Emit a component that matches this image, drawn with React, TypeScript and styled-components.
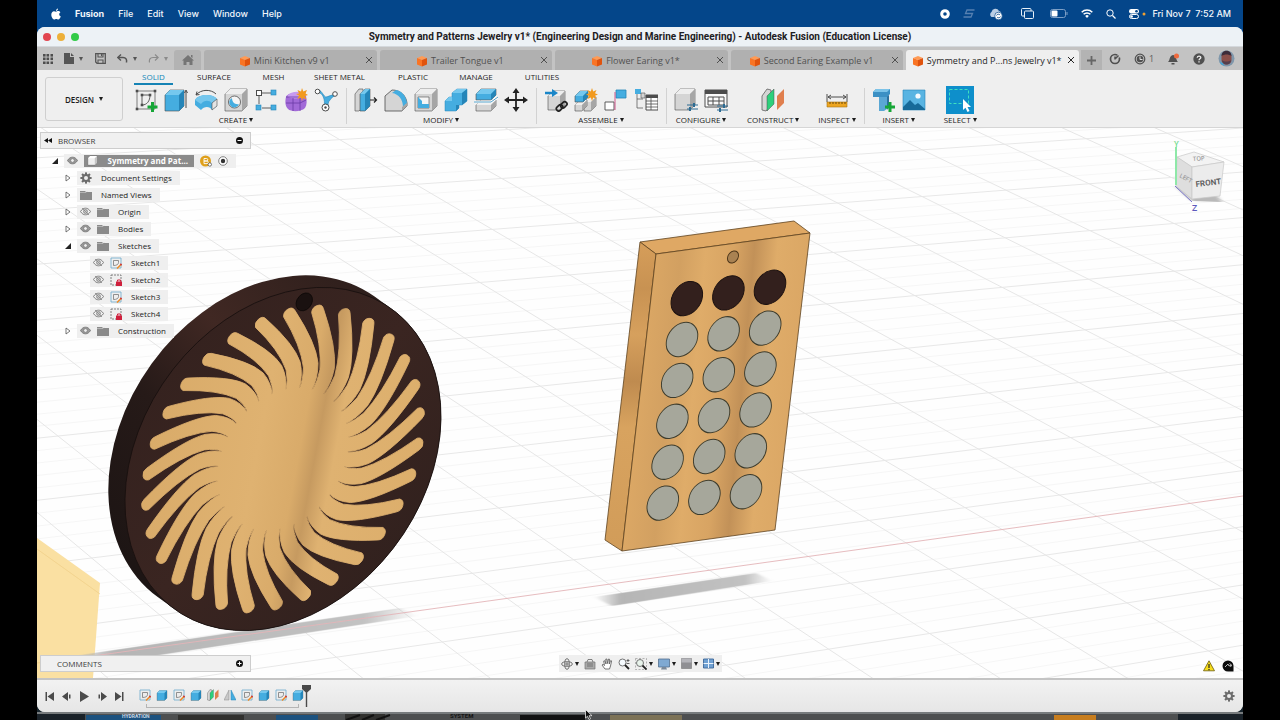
import React from "react";
import styled, { createGlobalStyle } from "styled-components";

const GlobalStyle = createGlobalStyle`
  * { box-sizing: border-box; }
  body { margin: 0; background: #000; font-family: "Open Sans", "Noto Sans", sans-serif; color: #1c1c1c; }
  button { font: inherit; color: inherit; background: none; border: 0; padding: 0; margin: 0; display: inline-flex; align-items: center; justify-content: center; }
  svg { display: block; flex: none; }
`;

/* ---------- layout ---------- */
const Screen = styled.div`
  min-height: 100vh;
  padding: 0 37px;
  display: flex;
  flex-direction: column;
  background: #000;
`;
const Desktop = styled.div`
  flex: 1;
  display: flex;
  flex-direction: column;
  background: linear-gradient(#04468a 0 40px, #17242c 60px);
`;
const MenuBar = styled.nav`
  height: 27px;
  padding: 0 12px 0 14px;
  display: flex;
  align-items: center;
  gap: 14px;
  color: #f2f6fb;
  font: 500 9px/12px Inter, sans-serif;
`;
const MenuItem = styled.button<{ $bold?: boolean }>`
  font-weight: ${(p) => (p.$bold ? 700 : 500)};
`;
const MenuExtras = styled.div`
  margin-left: auto;
  display: flex;
  align-items: center;
  gap: 13px;
`;
const Clock = styled.time`
  white-space: pre;
  margin-left: -7px;
`;
const AppWindow = styled.main`
  flex: 1;
  display: flex;
  flex-direction: column;
  border-radius: 8px;
  overflow: hidden;
  background: #efefef;
`;
const TitleBar = styled.header`
  height: 20px;
  padding: 0 6px;
  display: grid;
  grid-template-columns: 60px 1fr 60px;
  align-items: center;
  background: #edf2f6;
  border-bottom: 1px solid #d4d8dc;
`;
const Lights = styled.div`
  display: flex;
  gap: 6px;
`;
const Light = styled.button<{ $c: string }>`
  width: 8px;
  height: 8px;
  border-radius: 50%;
  background: ${(p) => p.$c};
`;
const Title = styled.h1`
  margin: 0;
  text-align: center;
  white-space: nowrap;
  font: 700 10px/14px Roboto, sans-serif;
  color: #1d2023;
`;
const TabBar = styled.div`
  height: 23px;
  display: flex;
  align-items: flex-end;
  background: #c3c3c3;
  color: #5c5c5c;
`;
const QuickTools = styled.div`
  width: 137px;
  height: 23px;
  padding: 0 6px;
  display: flex;
  align-items: center;
  justify-content: space-between;
`;
const ToolPair = styled.button<{ $dim?: boolean }>`
  gap: 5px;
  color: ${(p) => (p.$dim ? "#8b8b8b" : "#555")};
`;
const HomeTab = styled.button`
  width: 27px;
  height: 20px;
  margin-right: 3px;
  background: #b3b3b3;
  border-radius: 3px 3px 0 0;
`;
const Tabs = styled.div`
  flex: 1;
  display: flex;
  gap: 3px;
  min-width: 0;
`;
const Tab = styled.div<{ $active?: boolean }>`
  flex: 1;
  min-width: 0;
  height: 20px;
  padding-right: 4px;
  display: flex;
  align-items: center;
  border-radius: 3px 3px 0 0;
  background: ${(p) => (p.$active ? "#efefef" : "#b0b0b0")};
  color: ${(p) => (p.$active ? "#262626" : "#505050")};
`;
const TabName = styled.button`
  flex: 1;
  gap: 3px;
  padding-top: 1px;
  font-size: 9px;
  line-height: 12px;
  white-space: nowrap;
`;
const NewTab = styled.button`
  width: 21px;
  height: 20px;
  margin-left: 2px;
  background: #b3b3b3;
`;
const Account = styled.div`
  width: 141px;
  height: 23px;
  padding: 0 8px 0 7px;
  display: flex;
  align-items: center;
  justify-content: space-between;
  font-size: 9px;
  button { gap: 3px; }
`;
const Ribbon = styled.section`
  height: 58px;
  display: flex;
  background: #efefef;
  border-bottom: 1px solid #d6d6d6;
`;
const Workspace = styled.button`
  width: 78px;
  height: 44px;
  margin: 7px 3px 0 8px;
  gap: 5px;
  border: 1px solid #cfcfcf;
  border-radius: 3px;
  font-size: 8px;
  font-weight: 600;
`;
const RibbonBody = styled.div`
  flex: 1;
  display: flex;
  flex-direction: column;
`;
const RibbonTabs = styled.div`
  height: 15px;
  padding-left: 8px;
  display: flex;
`;
const RibbonTab = styled.button<{ $active?: boolean; $w: number }>`
  width: ${(p) => p.$w}px;
  font-size: 8px;
  line-height: 14px;
  font-weight: 500;
  color: ${(p) => (p.$active ? "#0f86b8" : "#1f1f1f")};
  span { height: 15px; padding: 0 8px; border-bottom: 2px solid ${(p) => (p.$active ? "#1583b5" : "transparent")}; }
`;
const Groups = styled.div`
  flex: 1;
  display: flex;
`;
const Group = styled.div<{ $pad?: number }>`
  padding: 0 ${(p) => p.$pad ?? 8}px;
  display: flex;
  flex-direction: column;
  align-items: center;
  position: relative;
  & + &::before {
    content: "";
    position: absolute;
    left: 0;
    top: 3px;
    height: 36px;
    border-left: 1px solid #d2d2d2;
  }
`;
const IconRow = styled.div`
  height: 29px;
  display: flex;
  align-items: center;
  gap: 6px;
`;
const SelectTile = styled.button`
  width: 28px;
  height: 28px;
  background: #0e8fcb;
`;
const GroupLabel = styled.button`
  gap: 2px;
  font-size: 8px;
  line-height: 12px;
  font-weight: 500;
`;
const Viewport = styled.section`
  flex: 1;
  position: relative;
  display: flex;
  flex-direction: column;
  justify-content: space-between;
  padding: 4px 3px 6px;
  background: #fff;
`;
const Scene = styled.svg`
  position: absolute;
  inset: 0;
  width: 100%;
  height: 100%;
`;
const Browser = styled.aside`
  position: relative;
  width: 211px;
`;
const PanelBar = styled.div`
  width: 211px;
  height: 17px;
  padding: 0 7px 0 3px;
  display: flex;
  align-items: center;
  justify-content: space-between;
  background: #f0f0f0;
  border: 1px solid #cdcdcd;
  font-size: 8px;
  color: #3c3c3c;
`;
const PanelTitle = styled.h2<{ $indent: number }>`
  margin: 0;
  flex: 1;
  font: inherit;
  padding-left: ${(p) => p.$indent}px;
`;
const Tree = styled.ul`
  list-style: none;
  margin: 3px 0 0;
  padding: 0;
`;
const Node = styled.li<{ $indent: number }>`
  height: 17px;
  padding-left: ${(p) => p.$indent}px;
  display: flex;
  align-items: center;
  gap: 6px;
`;
const NodeBody = styled.div`
  height: 14px;
  padding: 0 8px 0 3px;
  display: flex;
  align-items: center;
  gap: 6px;
  background: #eeeeeeee;
  font-size: 8px;
  font-weight: 500;
  color: #1c1c1c;
`;
const RootName = styled.span`
  height: 12px;
  width: 110px;
  padding: 0 6px 0 3px;
  display: flex;
  align-items: center;
  justify-content: space-between;
  background: #8b8b8b;
  color: #fff;
  font-weight: 700;
`;
const NodeName = styled.button`
  padding-left: 3px;
`;
const ViewFooter = styled.footer`
  position: relative;
  display: grid;
  grid-template-columns: 1fr auto 1fr;
  align-items: center;
`;
const NavBar = styled.div`
  height: 17px;
  padding: 0 2px;
  display: flex;
  align-items: center;
  gap: 5px;
  background: #efefef;
`;
const NavButton = styled.button`
  gap: 2px;
`;
const Status = styled.div`
  justify-self: end;
  padding: 5px 6px 0 0;
  display: flex;
  gap: 7px;
`;
const Timeline = styled.section`
  height: 34px;
  padding: 0 8px;
  display: flex;
  align-items: center;
  border-top: 2px solid #c4c4c4;
  background: linear-gradient(#f2f2f2, #e6e6e6);
`;
const Transport = styled.div`
  display: flex;
  gap: 8px;
  color: #4b4b4b;
`;
const Features = styled.ol`
  list-style: none;
  margin: 0 -2px 0 15px;
  padding: 0 0 2px;
  display: flex;
  gap: 5px;
  position: relative;
  &::after {
    content: "";
    position: absolute;
    left: 7px;
    right: 5px;
    bottom: -5px;
    height: 3px;
    border: solid #b5b5b5;
    border-width: 0 1px 1px;
  }
`;
const Spacer = styled.div`
  flex: 1;
`;
const Backdrop = styled.div`
  height: 8px;
`;
const Pointer = styled.svg`
  position: fixed;
  left: 585px;
  top: 709px;
`;

/* ---------- small glyphs ---------- */
type IconProps = { children: React.ReactNode; w?: number; h?: number; box?: string };
const I = ({ children, w = 24, h = w, box = "0 0 24 24" }: IconProps) => (
  <svg width={w} height={h} viewBox={box} fill="none" aria-hidden="true">{children}</svg>
);
const Caret = () => <I w={4} h={4} box="0 0 4 4"><path d="M0 0h4L2 4z" fill="currentColor" /></I>;
const Plus = ({ x, y }: { x: number; y: number }) => (
  <path d={`M${x} ${y - 5}v10M${x - 5} ${y}h10`} stroke="#16a637" strokeWidth="3" />
);
const BLUE = "#45ade0";
const DARK = "#2585b8";
const GREY = "#d5d5d5";
const SHADE = "#a6a6a6";
const INK = "#4c4c4c";

const DocCube = () => (
  <I w={12} box="0 0 12 12">
    <path d="M1 3l5-2 5 2-5 2z" fill="#ff9b55" />
    <path d="M1 3l5 2v6.500L1 9.500z" fill="#f97424" />
    <path d="M11 3L6 5v6.500l5-2z" fill="#e0530d" />
  </I>
);
const Close = () => <I w={8} box="0 0 8 8"><path d="M1 1l6 6M7 1L1 7" stroke="currentColor" /></I>;

const Box = ({ x = 3, y = 2, w = 19, h = 20, c = GREY, s = SHADE, t = "#eee" }) => (
  <g>
    <path d={`M${x} ${y + 5}l5-5h${w - 5}v${h - 5}l-5 5h-${w - 5}z`} fill={c} stroke={INK} strokeWidth=".6" />
    <path d={`M${x} ${y + 5}l5-5h${w - 5}l-5 5z`} fill={t} />
    <path d={`M${x + w - 5} ${y + 5}l5-5v${h - 5}l-5 5z`} fill={s} />
  </g>
);

const icons: Record<string, React.ReactNode> = {
  sketch: <><path d="M3 3h18v18H3z" stroke={INK} strokeWidth=".7" /><path d="M8 7h8M8 7v10c5 0 8-4 8-10" stroke={INK} strokeWidth=".9" />
    {[[2, 2], [20, 2], [2, 20], [7, 6], [7, 16], [15, 6]].map(([x, y]) => <rect key={`${x}${y}`} x={x - 0.3} y={y - 0.3} width="2.600" height="2.600" fill={INK} />)}<Plus x={18.500} y={19} /></>,
  extrude: <><Box x={1} y={2} w={19} h={21} c={BLUE} s={DARK} t="#75c8ee" /><path d="M22 20V3M20.500 5L22 2l1.500 3" stroke={INK} /></>,
  revolve: <><path d="M1 12c3-6 18-7 22-1v7l-5 4c-2-4-8-4-11 0L1 17z" fill={BLUE} /><path d="M1 12c3-6 18-7 22-1l-5 4c-3-3-8-3-11 1z" fill="#76c7ed" /><path d="M18 15l5-4v7l-5 4z" fill="#e4e4e4" stroke={INK} strokeWidth=".6" /><path d="M2 7c5-6 15-6 20-1M2 7l1-3.500M2 7l3.500-.500" stroke={INK} /></>,
  hole: <><Box x={1} y={1} w={22} h={22} /><circle cx="10.500" cy="14" r="6" fill="#f5f5f5" stroke={INK} strokeWidth=".8" /><path d="M8 10a5 5 0 1 0 7 6c-4 1-7-2-7-6z" fill={BLUE} /></>,
  pattern: <><path d="M5 8v8M8 5h9M8 20h9" stroke={INK} strokeWidth=".9" /><rect x="2.500" y="2.500" width="5" height="5" fill="#fff" stroke={INK} /><rect x="17" y="2" width="5" height="5" fill={BLUE} stroke={DARK} strokeWidth=".6" /><rect x="2" y="17" width="5" height="5" fill={BLUE} stroke={DARK} strokeWidth=".6" /><rect x="17" y="17" width="5" height="5" fill={BLUE} stroke={DARK} strokeWidth=".6" /></>,
  form: <><path d="M2 9c1-5 17-6 20-1 1 4 1 9-1 12-4 4-14 4-17 1-3-3-3-8-2-12z" fill="#a26ad8" /><path d="M3 8c4-5 14-6 18-1-3 4-13 5-18 1z" fill="#c79af0" /><path d="M2 15h14l6-3M9 10v13M16 10v13M2 9h14l6-3" stroke="#6b3aa6" strokeWidth=".8" /><path d="M18 0l1.300 3.500L23 2l-1.500 3.500L24 7l-3 1 1.500 3.500-3.500-1.500L18 13l-1-3.500-3.500 1.500L15 7.500 12 6l3-.500L13.500 2 17 3.500z" fill="#f29a1e" /></>,
  gen: <><path d="M3 4c5 1 6 4 7 7 1 4 0 6 0 9h4c0-4 0-6 2-8 1-2 4-4 6-5-4-1-8 2-10 2S8 3 5 2z" fill={BLUE} stroke={DARK} strokeWidth=".6" /><circle cx="3.500" cy="3.500" r="2.300" fill="#fff" stroke={INK} /><circle cx="21" cy="6" r="2.300" fill="#fff" stroke={INK} /><circle cx="11.500" cy="19.500" r="3.500" fill="#fff" stroke={INK} /><circle cx="11.500" cy="19.500" r="1.200" fill={INK} /></>,
  press: <><path d="M1 6l4-5h4v18l-4 4H1z" fill={GREY} stroke={INK} strokeWidth=".6" /><Box x={6} y={1} w={10} h={22} c={BLUE} s={DARK} t="#75c8ee" /><path d="M16 12h6M20 9.500l2.500 2.500-2.500 2.500" stroke="#222" strokeWidth="1.200" /></>,
  fillet: <><path d="M1 8l7-6c8 0 14 5 15 13v3l-5 5H1z" fill={GREY} stroke={INK} strokeWidth=".8" /><path d="M8 5l4-3c6 1 10 6 11 13l-4 4c0-7-4-13-11-14z" fill={BLUE} /><path d="M18 19l5-4v3l-5 5z" fill={SHADE} /></>,
  shell: <><Box x={1} y={1} w={22} h={22} /><path d="M4 9h11v11H4z" fill="#f5f5f5" stroke={INK} strokeWidth=".6" /><path d="M4 9l4 4v3h7v4H4z" fill={BLUE} /></>,
  combine: <><path d="M1 13l4-4h3V5l5-4h10v12l-5 4h-3v3l-3 3H1z" fill={BLUE} stroke={DARK} strokeWidth=".5" /><path d="M8 5l5-4h10l-5 4zM1 13l4-4h3v4z" fill="#75c8ee" /><path d="M18 5l5-4v12l-5 4zM12 20v-3h3v3l-3 3z" fill={DARK} /></>,
  split: <><Box x={2} y={12} w={20} h={11} /><Box x={2} y={1} w={20} h={11} c={BLUE} s={DARK} t="#75c8ee" /><path d="M0 14h17l7-5" stroke="#fff" strokeWidth="2.500" /><path d="M0 14h17l7-5" stroke={DARK} strokeWidth=".8" /></>,
  move: <><path d="M12 2v20M2 12h20" stroke="#222" strokeWidth="1.800" /><path d="M12 0l3.500 5h-7zM12 24l3.500-5h-7zM0 12l5-3.500v7zM24 12l-5-3.500v7z" fill="#222" /></>,
  link: <><Box x={4} y={3} w={17} h={19} /><path d="M1 5h9" stroke="#1a86c8" strokeWidth="2.500" /><path d="M8 1l6 4-6 4z" fill="#1a86c8" /><g stroke="#222" strokeWidth="1.700"><rect x="12" y="18" width="7" height="4.500" rx="2.200" transform="rotate(-45 15 20)" /><rect x="16.500" y="14.500" width="7" height="4.500" rx="2.200" transform="rotate(-45 20 17)" /></g></>,
  newcomp: <><Box x={10} y={9} w={12} h={14} /><Box x={1} y={12} w={12} h={11} /><Box x={1} y={3} w={13} h={11} c={BLUE} s={DARK} t="#75c8ee" /><path d="M18 0l1.200 3.500L22.500 2 21 5.200 24 6.500l-3 1.200 1.500 3.300-3.300-1.500L18 13l-1.200-3.500-3.300 1.500L15 7.700 12 6.500l3-1.300L13.500 2l3.300 1.500z" fill="#f29a1e" /></>,
  joint: <><path d="M1 14h9v8H1z" fill="#fff" stroke={INK} strokeWidth=".9" /><path d="M12 2h10v8H12z" fill={BLUE} stroke={DARK} strokeWidth=".8" /><path d="M11 22V4" stroke="#d1568c" /></>,
  bom: <><path d="M1 1h6v5H1z" fill={BLUE} /><path d="M3 6v14h6M3 11h6" stroke={INK} strokeWidth=".7" /><path d="M7 5h4v5H7z" fill={GREY} stroke={INK} strokeWidth=".6" /><path d="M12 7h12v15H12z" fill="#fff" stroke={INK} /><path d="M12 7h12v3H12z" fill={INK} /><path d="M12 13h12M12 16h12M12 19h12M17 10v12" stroke={INK} strokeWidth=".8" /></>,
  config: <><Box x={1} y={1} w={20} h={21} /><path d="M13 17h11M13 21h11" stroke="#2c6b92" /><path d="M20 15v4M16 19v4" stroke="#2c6b92" strokeWidth="2" /></>,
  table: <><path d="M1 2h22v17H1z" fill="#fafafa" stroke={INK} /><path d="M1 2h22v4H1z" fill={INK} /><path d="M4 9h16v8H4zM4 13h16M9 9v8M15 9v8" stroke={INK} /><path d="M13 18h11M13 22h11" stroke="#2c6b92" /><path d="M20 16v4M16 20v4" stroke="#2c6b92" strokeWidth="2" /></>,
  plane: <><path d="M1 8l5-7 4 1v15l-5 6-4-1z" fill={GREY} stroke={INK} strokeWidth=".7" /><path d="M6 8l7-7v15l-7 7z" fill="#2dd07b" stroke={INK} strokeWidth=".5" /><path d="M16 8l7-7v14l-7 7z" fill="#e07f4e" /></>,
  ruler: <><path d="M2 6v8M22 6v8M3 9h18M6 7L3 9l3 2M18 7l3 2-3 2" stroke={INK} /><path d="M2 14h20v5H2z" fill="#eda520" stroke="#a87413" strokeWidth=".6" /><path d="M5 14v2M8 14v2M11 14v2M14 14v2M17 14v2M20 14v2" stroke="#6d4a0c" /></>,
  bolt: <><path d="M7 8h8v13l-3 2H7z" fill="#5aa7d4" /><path d="M15 8l2-1v12l-2 3z" fill="#2b6f9d" /><path d="M1 4l3-3h14v5l-3 3H1z" fill="#3c90c4" /><path d="M1 4l3-3h14l-3 3z" fill="#7cc3e8" /><Plus x={18} y={19} /></>,
  canvas: <><path d="M1 2h22v20H1z" fill="#59b4e2" stroke={DARK} strokeWidth=".6" /><circle cx="16" cy="8" r="2.600" fill="#f5fbff" /><path d="M1 19l7-7 5 5 3-2 7 6v1H1z" fill="#176a99" /></>,
};
const RibbonIcon = ({ n }: { n: string }) => <button aria-label={n}><I>{icons[n]}</I></button>;

const Eye = ({ off }: { off?: boolean }) => (
  <I w={11} h={9} box="0 0 11 9">
    <path d="M.500 4.500C2 2 3.800 1.200 5.500 1.200S9 2 10.500 4.500C9 7 7.200 7.800 5.500 7.800S2 7 .500 4.500z" stroke="#777" strokeWidth=".9" fill={off ? "none" : "#999"} />
    <circle cx="5.500" cy="4.500" r="1.900" fill={off ? "#ccc" : "#eee"} stroke="#777" strokeWidth=".8" />
    {off && <path d="M2 1l7 7" stroke="#888" strokeWidth=".8" />}
  </I>
);
const Folder = () => <I w={12} h={10} box="0 0 12 10"><path d="M0 1h5l1 1h6v8H0z" fill="#8a8a8a" /><path d="M0 2.500h6l1-1" stroke="#c5c5c5" strokeWidth=".7" /></I>;
const Gear = ({ s = 12 }) => (
  <I w={s} box="-6 -6 12 12">
    {[0, 45, 90, 135].map((a) => <rect key={a} x="-1" y="-5.600" width="2" height="11.200" fill="#6c6c6c" transform={`rotate(${a})`} />)}
    <circle r="3" stroke="#6c6c6c" strokeWidth="2" fill="#eee" />
  </I>
);
const MiniSketch = ({ lock }: { lock?: boolean }) => (
  <I w={12} box="0 0 12 12">
    <path d="M1 1h10v10H1z" stroke={lock ? "#666" : "#6aa9cd"} strokeDasharray={lock ? "2 1" : undefined} strokeWidth=".8" />
    {lock ? <><rect x="6" y="7.500" width="6" height="4.500" fill="#cf1f3c" /><path d="M7.500 7.500V6h3v1.500" stroke="#cf1f3c" /></>
      : <><path d="M3.500 3.500h5v2c0 2-2 3-5 3z" stroke="#777" strokeWidth=".8" /><path d="M7 11.500l4-4" stroke="#f08a24" strokeWidth="1.500" /><path d="M10.500 8l1-1" stroke="#cf2f2f" strokeWidth="1.800" /></>}
  </I>
);
const Arrow = ({ open }: { open?: boolean }) => (
  <I w={6} h={8} box="0 0 6 8">{open ? <path d="M6 1v6H0z" fill="#222" /> : <path d="M1 1l4 3-4 3z" stroke="#555" strokeWidth=".8" fill="#fff" />}</I>
);

/* ---------- model scene ---------- */
const DISC = "matrix(1.57 -.235 -.18 1.7 283 459)";
const rot = (x: number, y: number, deg: number) => {
  const a = (deg * Math.PI) / 180;
  return `${(x * Math.cos(a) - y * Math.sin(a)).toFixed(2)} ${(x * Math.sin(a) + y * Math.cos(a)).toFixed(2)}`;
};
const rays = Array.from({ length: 30 }, (_, i) => {
  const p = (x: number, y: number) => rot(x, y, i * 12);
  return `M${p(8.5, -85)}Q${p(17.5, -64)} ${p(17.8, -50)}Q${p(17, -43)} ${p(14.2, -38.6)}L${p(0, -30)}L${p(21.3, -34.7)}Q${p(26, -40)} ${p(27, -49.600)}Q${p(27, -62)} ${p(15.8, -86.400)}A3.800 3.800 0 0 0 ${p(8.5, -85)}Z`;
}).join("");

const VA = [6500, -230];
const VB = [-2188, -1348];
const through = (x: number, y: number, v: number[], x1: number, x2: number) => {
  const m = (v[1] - y) / (v[0] - x);
  return `M${x1} ${(y + m * (x1 - x)).toFixed(1)}L${x2} ${(y + m * (x2 - x)).toFixed(1)}`;
};
const rows: number[] = [];
for (let k = -3, y = 790; k < 18; k++) {
  rows.push(y);
  y -= 60 * Math.pow(0.96, k + 3) + 8;
}
const majorA = rows.map((y) => through(782, y, VA, 37, 1243)).join("");
const minorA = rows.slice(0, -1).flatMap((y, i) => [1, 2, 3, 4].map((k) => through(782, y + ((rows[i + 1] - y) * k) / 5, VA, 37, 1243))).join("");
const majorB = Array.from({ length: 22 }, (_, i) => through(-146 + i * 120, 560, VB, 37, 1243)).join("");

const Model = () => (
  <Scene viewBox="37 128 1206 550" preserveAspectRatio="xMidYMid slice" role="img" aria-label="Jewelry model">
    <defs>
      <linearGradient id="wood" gradientUnits="userSpaceOnUse" x1="-90" x2="90" y1="0" y2="16">
        <stop offset="0" stopColor="#d9ab69" /><stop offset=".4" stopColor="#dfb271" /><stop offset=".55" stopColor="#d9ab6a" />
        <stop offset=".61" stopColor="#c69a60" /><stop offset=".68" stopColor="#dfb271" /><stop offset="1" stopColor="#dcae6b" />
      </linearGradient>
      <linearGradient id="front" gradientUnits="userSpaceOnUse" x1="635" y1="390" x2="800" y2="405">
        <stop offset="0" stopColor="#dca865" /><stop offset=".2" stopColor="#d2a061" /><stop offset=".35" stopColor="#dfac69" />
        <stop offset=".52" stopColor="#d8a463" /><stop offset=".64" stopColor="#c29158" /><stop offset=".78" stopColor="#dfac69" /><stop offset="1" stopColor="#daa664" />
      </linearGradient>
      <linearGradient id="side" x1="0" y1="0" x2="0" y2="1">
        <stop offset="0" stopColor="#d69e5a" /><stop offset=".15" stopColor="#c89252" /><stop offset=".3" stopColor="#d6a05d" />
        <stop offset=".45" stopColor="#bf8b4f" /><stop offset=".6" stopColor="#d8a35f" /><stop offset="1" stopColor="#d19c59" />
      </linearGradient>
      <linearGradient id="rim" gradientUnits="userSpaceOnUse" x1="-90" y1="50" x2="50" y2="-90">
        <stop offset="0" stopColor="#1d1514" /><stop offset=".35" stopColor="#261a18" /><stop offset=".62" stopColor="#402823" /><stop offset="1" stopColor="#2e1f1c" />
      </linearGradient>
      <linearGradient id="face" x1="0" y1="0" x2="1" y2="1">
        <stop offset="0" stopColor="#33211e" /><stop offset=".5" stopColor="#3a2521" /><stop offset="1" stopColor="#2f201d" />
      </linearGradient>
      <linearGradient id="fade" x1="0" x2="1" y1="0" y2="0">
        <stop offset="0" stopColor="#b2b2b2" stopOpacity="0" /><stop offset=".15" stopColor="#b5b5b5" /><stop offset=".85" stopColor="#c2c2c2" /><stop offset="1" stopColor="#c2c2c2" stopOpacity="0" />
      </linearGradient>
      <filter id="soft" x="-10%" y="-40%" width="120%" height="180%"><feGaussianBlur stdDeviation="2 .6" /></filter>
    </defs>
    <rect x="37" y="128" width="1206" height="550" fill="#fefefe" />
    <path d={minorA} stroke="#f6f6f6" fill="none" />
    <path d={majorA} stroke="#e8e8e8" fill="none" />
    <path d={majorB} stroke="#e6e6e6" fill="none" />
    <path d="M37 538l63 45-7 95H37z" fill="#fae0a2" />
    <path d="M37 549l63 45M37 663l56-8" stroke="#efcf87" strokeWidth=".7" />
    <path d="M60 658L400 608l18 8L120 661z" fill="url(#fade)" filter="url(#soft)" />
    <path d="M594 597l162-24 16 8-160 25z" fill="url(#fade)" filter="url(#soft)" />
    <path d="M93 656L1243 496" stroke="#e3b4b8" strokeWidth=".9" />

    <g transform={DISC}>
      <path d="M-11.600-8.700L0 0" stroke="url(#rim)" strokeWidth="200" strokeLinecap="round" />
      <circle r="100" fill="url(#face)" stroke="#170f0e" strokeWidth=".5" />
      <circle cx="3" cy="-92" r="5.200" fill="#1a1110" stroke="#0d0807" strokeWidth=".5" />
      <path d={rays} fill="url(#wood)" stroke="url(#wood)" strokeWidth=".5" />
      <circle r="41.500" fill="url(#wood)" />
    </g>

    <g stroke="#5e421f" strokeWidth=".8" strokeLinejoin="round">
      <path d="M640 242l154-21 16 12-154 21z" fill="#dfa864" />
      <path d="M640 242l16 12-34 297-17-11z" fill="url(#side)" />
      <path d="M656 254l154-21-35 297-153 21z" fill="url(#front)" />
    </g>
    <g transform="matrix(1.57 -.235 -.18 1.7 733 257)"><circle r="3.500" fill="#a98252" stroke="#4b3519" strokeWidth=".6" /></g>
    {[0, 1, 2, 3, 4, 5].map((r) => [0, 1, 2].map((c) => (
      <g key={`${r}${c}`} transform={`matrix(1.57 -.235 -.18 1.7 ${686.8 + 41.6 * c - 4.800 * r} ${298.600 - 5.700 * c + 40.900 * r})`}>
        <circle r="10" fill={r ? "#a6a79b" : "#33201d"} stroke={r ? "#3d3c2d" : "#1c1110"} strokeWidth=".6" />
      </g>
    )))}

    <g>
      <path d="M1176 187l16 14 30 1-10-12z" fill="#b9b9b9" filter="url(#soft)" />
      <path d="M1177 157l17-5 30 10-32 5z" fill="#f3f3f3" stroke="#c9c9c9" strokeWidth=".7" />
      <path d="M1177 157l15 10v32l-16-13z" fill="#dedede" stroke="#c9c9c9" strokeWidth=".7" />
      <path d="M1192 167l32-5-4 34-28 3z" fill="#ececec" stroke="#c9c9c9" strokeWidth=".7" />
      <path d="M1176 147v38" stroke="#8ee8a8" strokeWidth="2" />
      <path d="M1175 186l17 16" stroke="#7672c8" />
      <g fontFamily="Open Sans, sans-serif" fontWeight="600">
        <text x="1174" y="147" fontSize="8" fill="#6fdc8f">Y</text>
        <text x="1192" y="211" fontSize="9" fill="#5d59bd">Z</text>
        <text x="1196" y="187" fontSize="8" fill="#5a5a5a" fontFamily="Roboto, sans-serif" transform="rotate(-7 1196 187)">FRONT</text>
        <text x="1179" y="177" fontSize="6" fill="#9a9a9a" transform="rotate(28 1179 177)">LEFT</text>
        <text x="1193" y="161" fontSize="6" fill="#9a9a9a" transform="rotate(-4 1193 161)">TOP</text>
      </g>
    </g>
  </Scene>
);

/* ---------- data ---------- */
const tabs = ["Mini Kitchen v9 v1", "Trailer Tongue v1", "Flower Earing v1*", "Second Earing Example v1", "Symmetry and P...ns Jewelry v1*"];
const ribbonTabs: [string, number][] = [["SOLID", 39], ["SURFACE", 82], ["MESH", 37], ["SHEET METAL", 95], ["PLASTIC", 52], ["MANAGE", 74], ["UTILITIES", 58]];
const groups: [string, string[], number][] = [
  ["CREATE", ["sketch", "extrude", "revolve", "hole", "pattern", "form", "gen"], 8],
  ["MODIFY", ["press", "fillet", "shell", "combine", "split", "move"], 8],
  ["ASSEMBLE", ["link", "newcomp", "joint", "bom"], 8],
  ["CONFIGURE", ["config", "table"], 8],
  ["CONSTRUCT", ["plane"], 11],
  ["INSPECT", ["ruler"], 8],
  ["INSERT", ["bolt", "canvas"], 8],
];
type TreeRow = { name: string; indent: number; arrow: boolean; open?: boolean; icons: React.ReactNode };
const tree: TreeRow[] = [
  { name: "Document Settings", indent: 25, arrow: true, icons: <Gear /> },
  { name: "Named Views", indent: 25, arrow: true, icons: <Folder /> },
  { name: "Origin", indent: 25, arrow: true, icons: <><Eye off /><Folder /></> },
  { name: "Bodies", indent: 25, arrow: true, icons: <><Eye /><Folder /></> },
  { name: "Sketches", indent: 25, arrow: true, open: true, icons: <><Eye /><Folder /></> },
  { name: "Sketch1", indent: 50, arrow: false, icons: <><Eye off /><MiniSketch /></> },
  { name: "Sketch2", indent: 50, arrow: false, icons: <><Eye off /><MiniSketch lock /></> },
  { name: "Sketch3", indent: 50, arrow: false, icons: <><Eye off /><MiniSketch /></> },
  { name: "Sketch4", indent: 50, arrow: false, icons: <><Eye off /><MiniSketch lock /></> },
  { name: "Construction", indent: 25, arrow: true, icons: <><Eye /><Folder /></> },
];
const MiniBox = () => <I w={12} box="0 0 24 24"><Box x={2} y={3} w={20} h={20} c={BLUE} s={DARK} t="#75c8ee" /></I>;
const MiniPlane = () => <I w={12}>{icons.plane}</I>;
const MiniMirror = () => <I w={12} box="0 0 12 12"><path d="M5 1v10H0z" fill="#c9c9c9" stroke="#888" strokeWidth=".5" /><path d="M7 1v10h5z" fill={BLUE} stroke={DARK} strokeWidth=".5" /></I>;
const features = [MiniSketch, MiniBox, MiniSketch, MiniBox, MiniPlane, MiniMirror, MiniSketch, MiniBox, MiniSketch, MiniBox];

export default function App() {
  return (
    <Screen>
      <GlobalStyle />
      <Desktop>
        <MenuBar>
          <I w={10} h={12} box="0 0 10 12"><path d="M7 .500C7 2 6 3 5 3c0-1.300 1-2.300 2-2.500zM5 3.700c.600 0 1.200-.600 2.200-.600.900 0 1.700.500 2.200 1.200-1.800 1-1.500 3.500.400 4.300C9.300 10 8.300 11.500 7.300 11.500c-.800 0-1.100-.500-2-.500s-1.300.500-2 .500C2 11.500.300 9 .300 6.700c0-2.200 1.300-3.500 2.700-3.500.900 0 1.500.500 2 .500z" fill="#fff" /></I>
          <MenuItem $bold>Fusion</MenuItem>
          {["File", "Edit", "View", "Window", "Help"].map((m) => <MenuItem key={m}>{m}</MenuItem>)}
          <MenuExtras>
            <I w={10} box="0 0 10 10"><circle cx="5" cy="5" r="3.300" stroke="#fff" strokeWidth="3" /></I>
            <I w={12} h={9} box="0 0 12 9"><path d="M11.500 1H4L2.500 4.500h7L8 8H.500" stroke="#5680b1" strokeWidth="1.300" /></I>
            <I w={20} h={12} box="0 0 20 12"><path d="M3.500 9a3 3 0 0 1 0-5A4 4 0 0 1 11 3a3 3 0 0 1 2.500 3v3z" fill="#b9cde4" /><circle cx="10.500" cy="8" r="3.800" fill="#fff" stroke="#04468a" strokeWidth=".7" /><path d="M8.500 7.500a2 2 0 0 1 3.500-.500M12.500 8.500a2 2 0 0 1-3.500.500" stroke="#34679b" /></I>
            <I w={16} h={11} box="0 0 16 11"><path d="M3 8H1.500a1 1 0 0 1-1-1V1.500a1 1 0 0 1 1-1H9a1 1 0 0 1 1 1V3" stroke="#e8f0f8" /><rect x="3.500" y="3" width="9" height="7.500" rx="1" stroke="#e8f0f8" /></I>
            <I w={18} h={9} box="0 0 18 9"><rect x=".500" y=".500" width="15" height="8" rx="2" stroke="#7d9fc6" /><rect x="1.500" y="1.500" width="6" height="6" rx="1" fill="#fff" /><path d="M17 3v3" stroke="#7d9fc6" /></I>
            <I w={12} h={9} box="0 0 12 9"><path d="M.700 3.200a7.500 7.500 0 0 1 10.600 0M2.600 5.300a4.800 4.800 0 0 1 6.800 0" stroke="#fff" strokeWidth="1.500" /><path d="M4.200 6.900a2.600 2.600 0 0 1 3.600 0L6 8.900z" fill="#fff" /></I>
            <I w={10} box="0 0 10 10"><circle cx="4" cy="4" r="3.200" stroke="#fff" /><path d="M6.500 6.500L9.500 9.500" stroke="#fff" strokeWidth="1.200" /></I>
            <I w={17} h={10} box="0 0 17 10"><rect x="0" y="0" width="10" height="4.500" rx="2.200" fill="#fff" /><circle cx="7.500" cy="2.200" r="1.300" fill="#04468a" /><rect x=".500" y="5.500" width="9" height="4" rx="2" stroke="#fff" /><circle cx="2.600" cy="7.500" r="1.300" fill="#fff" /><circle cx="15" cy="5" r="1.500" fill="#f0a030" /></I>
            <Clock>{"Fri Nov 7  7:52 AM"}</Clock>
          </MenuExtras>
        </MenuBar>

        <AppWindow>
          <TitleBar>
            <Lights>
              <Light $c="#e24650" aria-label="Close" /><Light $c="#edb03a" aria-label="Minimize" /><Light $c="#32cb48" aria-label="Zoom" />
            </Lights>
            <Title>Symmetry and Patterns Jewelry v1* (Engineering Design and Marine Engineering) - Autodesk Fusion (Education License)</Title>
          </TitleBar>

          <TabBar>
            <QuickTools>
              <button aria-label="Data panel"><I w={10} box="0 0 10 10">{[0, 4, 8].map((x) => [0, 4, 8].map((y) => <rect key={`${x}${y}`} x={x - (x ? 0.5 : 0)} y={y - (y ? 0.5 : 0)} width="2.600" height="2.600" fill="#4e4e4e" />))}</I></button>
              <ToolPair aria-label="File"><I w={10} h={11} box="0 0 10 11"><path d="M0 0h6v4h4v7H0z" fill="#555" /><path d="M7 0l3 3H7z" fill="#555" /></I><Caret /></ToolPair>
              <button aria-label="Save"><I w={11} box="0 0 11 11"><path d="M.700.700h9.600v9.600H2L.700 9z" stroke="#555" strokeWidth="1.300" /><path d="M3 1v3h5V1M3 10V7h5v3M6.500 1v2" stroke="#555" strokeWidth="1.100" /></I></button>
              <ToolPair aria-label="Undo"><I w={11} h={9} box="0 0 11 9"><path d="M1 3.500h5c3 0 4 2 3.500 5" stroke="#555" strokeWidth="1.500" /><path d="M4 .500L.800 3.500 4 6.500" stroke="#555" strokeWidth="1.400" /></I><Caret /></ToolPair>
              <ToolPair $dim aria-label="Redo"><I w={11} h={9} box="0 0 11 9"><path d="M10 3.500H5c-3 0-4 2-3.500 5M7 .500l3.200 3L7 6.500" stroke="currentColor" strokeWidth="1.200" /></I><Caret /></ToolPair>
            </QuickTools>
            <HomeTab aria-label="Home"><I w={12} h={10} box="0 0 12 10"><path d="M6 0l6 5.500h-1.500V10h-3V7h-3v3h-3V5.500H0z" fill="#757575" /><path d="M9 0h1.500v3L9 2z" fill="#757575" /></I></HomeTab>
            <Tabs>
              {tabs.map((t, i) => (
                <Tab key={t} $active={i === 4}>
                  <TabName><DocCube />{t}</TabName>
                  <button aria-label={`Close ${t}`}><Close /></button>
                </Tab>
              ))}
            </Tabs>
            <NewTab aria-label="New tab"><I w={9} box="0 0 9 9"><path d="M4.500 0v9M0 4.500h9" stroke="#666" strokeWidth="1.800" /></I></NewTab>
            <Account>
              <button aria-label="Extensions"><I w={12} box="0 0 12 12"><circle cx="6" cy="6" r="4.500" stroke="#505050" strokeWidth="1.700" strokeDasharray="23 3" /><path d="M6 6l3.500-3.500M6 3.500v3" stroke="#505050" strokeWidth="1.500" /></I></button>
              <button><I w={12} box="0 0 12 12"><circle cx="6" cy="6" r="4.800" stroke="#505050" strokeWidth="1.200" /><circle cx="6" cy="6" r="3.300" fill="#505050" /><path d="M6 3.500v3h2.500" stroke="#ddd" /></I>1</button>
              <button aria-label="Notifications"><I w={13} h={12} box="0 0 13 12"><path d="M1 9c2-1.500 1-6 5-7 3 0 3 5 5 7zM4.500 10h3v1.500h-3z" fill="#505050" /><circle cx="9.500" cy="3" r="2.500" fill="#ef6a3e" /></I></button>
              <button aria-label="Help"><I w={12} box="0 0 12 12"><circle cx="6" cy="6" r="5.700" fill="#505050" /><path d="M4.200 4.800c0-2.300 3.600-2.300 3.600-.200 0 1.200-1.800 1.300-1.800 2.700M6 8.200v1.400" stroke="#eee" strokeWidth="1.300" /></I></button>
              <button aria-label="Account"><I w={17} box="0 0 17 17"><circle cx="8.500" cy="8.500" r="8" fill="#7f97ab" /><path d="M3.500 7c0-7 10-7 10 0v3c0 6-10 6-10 0z" fill="#8a4f4a" /><path d="M3.500 6c0-7 10-7 10 0-3-2-7-2-10 0z" fill="#3c2c3a" /><path d="M4 10c2 2 7 2 9 0 0 6-9 6-9 0z" fill="#54404f" /><path d="M1.500 12l3.500 1 1 3A8 8 0 0 1 1.500 12z" fill="#42a6d8" /></I></button>
            </Account>
          </TabBar>

          <Ribbon>
            <Workspace>DESIGN <Caret /></Workspace>
            <RibbonBody>
              <RibbonTabs>{ribbonTabs.map(([t, w], i) => <RibbonTab key={t} $w={w} $active={!i}><span>{t}</span></RibbonTab>)}</RibbonTabs>
              <Groups>
                {groups.map(([label, list, pad]) => (
                  <Group key={label} $pad={pad}>
                    <IconRow>{list.map((n) => <RibbonIcon key={n} n={n} />)}</IconRow>
                    <GroupLabel>{label}<Caret /></GroupLabel>
                  </Group>
                ))}
                <Group $pad={10}>
                  <IconRow>
                    <SelectTile aria-label="Select"><I w={28} box="0 0 28 28"><path d="M3.500 3.500h19v14h-19z" stroke="#3fe0c0" strokeDasharray="3 2" /><path d="M17 13v11l2.500-2.300 2 4.300 2-1-2-4H25z" fill="#fff" /></I></SelectTile>
                  </IconRow>
                  <GroupLabel>SELECT<Caret /></GroupLabel>
                </Group>
              </Groups>
            </RibbonBody>
          </Ribbon>

          <Viewport>
            <Model />
            <Browser>
              <PanelBar>
                <I w={8} h={5} box="0 0 8 5"><path d="M4 0v5L0 2.500zM8 0v5L4 2.500z" fill="#111" /></I>
                <PanelTitle $indent={6}>BROWSER</PanelTitle>
                <button aria-label="Collapse"><I w={7} box="0 0 7 7"><circle cx="3.500" cy="3.500" r="3.500" fill="#111" /><path d="M1.500 3.500h4" stroke="#fff" /></I></button>
              </PanelBar>
              <Tree>
                <Node $indent={12}>
                  <Arrow open />
                  <NodeBody>
                    <Eye />
                    <RootName><I w={11}><Box x={2} y={2} w={20} h={20} c="#efefef" s="#c4c4c4" t="#fff" /></I>Symmetry and Pat...</RootName>
                    <I w={12} box="0 0 12 12"><circle cx="5.500" cy="6" r="5.500" fill="#dfa01b" /><path d="M4 3.500h2.500a1.200 1.200 0 0 1 0 2.500H4zM4 6h3a1.200 1.200 0 0 1 0 2.600H4z" stroke="#fff" strokeWidth=".9" /><circle cx="9.800" cy="9.500" r="1.700" fill="#fff" stroke="#444" strokeWidth=".7" /></I>
                    <I w={10} box="0 0 10 10"><circle cx="5" cy="5" r="4.300" fill="#fff" stroke="#666" strokeWidth=".8" /><circle cx="5" cy="5" r="2.200" fill="#333" /></I>
                  </NodeBody>
                </Node>
                {tree.map((r) => (
                  <Node key={r.name} $indent={r.indent}>
                    {r.arrow && <Arrow open={r.open} />}
                    <NodeBody>{r.icons}<NodeName>{r.name}</NodeName></NodeBody>
                  </Node>
                ))}
              </Tree>
            </Browser>
            <ViewFooter>
              <PanelBar>
                <PanelTitle $indent={13}>COMMENTS</PanelTitle>
                <button aria-label="Expand comments"><I w={7} box="0 0 7 7"><circle cx="3.500" cy="3.500" r="3.500" fill="#111" /><path d="M1.500 3.500h4M3.500 1.500v4" stroke="#fff" /></I></button>
              </PanelBar>
              <NavBar>
                <NavButton aria-label="Orbit"><I w={12} box="0 0 12 12"><ellipse cx="6" cy="6" rx="5.300" ry="2.300" stroke="#555" strokeWidth=".8" /><ellipse cx="6" cy="6" rx="2.300" ry="5.300" stroke="#555" strokeWidth=".8" /><path d="M6 4v4M4 6h4" stroke="#555" strokeWidth=".7" /></I><Caret /></NavButton>
                <NavButton aria-label="Look at"><I w={12} box="0 0 12 12"><path d="M1 4h10v7H1z" fill="#aaa" stroke="#777" strokeWidth=".7" /><path d="M3 4l1-2.500h4L9 4M3 6h6M3 8h6" stroke="#666" strokeWidth=".8" /></I></NavButton>
                <NavButton aria-label="Pan"><I w={12} box="0 0 12 12"><path d="M4 11L1 7l1-.700 1.500 1.200L2.700 3l1-.300L5 6 4.800 1h1.100L6.500 5.500 7.500 1l1 .200L8.200 6l1.500-3.500.900.400L9.500 8 8.500 11z" fill="#fff" stroke="#555" strokeWidth=".8" /></I></NavButton>
                <NavButton aria-label="Zoom"><I w={12} box="0 0 12 12"><circle cx="4.500" cy="4.500" r="3.500" fill="#f6fbff" stroke="#666" strokeWidth=".9" /><path d="M7 7l4 4" stroke="#222" strokeWidth="1.800" /><path d="M10 1v3M8.500 2.500h3M8.500 5.500h3" stroke="#444" strokeWidth=".8" /></I></NavButton>
                <NavButton aria-label="Fit"><I w={12} box="0 0 12 12"><path d="M.500.500h11v11H.500z" stroke="#999" strokeWidth=".7" strokeDasharray="2 1.500" /><circle cx="5" cy="5" r="3.500" fill="#e9f4ec" stroke="#666" strokeWidth=".9" /><path d="M7.500 7.500l4 4" stroke="#222" strokeWidth="1.800" /></I><Caret /></NavButton>
                <NavButton aria-label="Display"><I w={12} box="0 0 12 12"><path d="M.500 1h11v8H.500z" fill="#7fa9d2" stroke="#54708f" strokeWidth=".8" /><path d="M4 9h4l1 2.500H3z" fill="#7c8a99" /></I><Caret /></NavButton>
                <NavButton aria-label="Effects"><I w={11} box="0 0 11 11"><path d="M.500.500h10v10H.500z" fill="#8f8f93" stroke="#777" strokeWidth=".6" /><path d="M.500.500h10v4H.500z" fill="#b5b5ba" /></I><Caret /></NavButton>
                <NavButton aria-label="Viewports"><I w={11} box="0 0 11 11"><path d="M.500 1h10v9H.500z" fill="#6fa0d2" stroke="#3c6798" strokeWidth=".9" /><path d="M5.500 1v9M.500 5.500h10" stroke="#eaf2fb" /></I><Caret /></NavButton>
              </NavBar>
              <Status>
                <I w={12} box="0 0 12 12"><path d="M6 .800l5.500 10H.500z" fill="#f6dc1c" stroke="#6b5c0b" strokeWidth=".8" /><path d="M6 4v4M6 9v1.200" stroke="#222" strokeWidth="1.200" /></I>
                <I w={12} box="0 0 12 12"><path d="M6 .500A5.500 5.500 0 1 0 6 11.500h5.500V6A5.500 5.500 0 0 0 6 .500z" fill="#0c0c0c" /><path d="M3 7l3-3 1 2 2.500-1M7.500 3.500L9.500 5l-1 2" stroke="#ccc" strokeWidth=".9" /></I>
              </Status>
            </ViewFooter>
          </Viewport>

          <Timeline>
            <Transport>
              <button aria-label="Start"><I w={9} box="0 0 9 9"><path d="M.500 0H2v9H.500zM9 0v9L2.500 4.500z" fill="currentColor" /></I></button>
              <button aria-label="Back"><I w={10} h={9} box="0 0 10 9"><path d="M6 0v9L0 4.500zM7 2.500h1.500v4H7z" fill="currentColor" /></I></button>
              <button aria-label="Play"><I w={9} h={11} box="0 0 9 11"><path d="M0 0l9 5.500L0 11z" fill="currentColor" /></I></button>
              <button aria-label="Forward"><I w={10} h={9} box="0 0 10 9"><path d="M4 0v9l6-4.500zM1.500 2.500H3v4H1.500z" fill="currentColor" /></I></button>
              <button aria-label="End"><I w={9} box="0 0 9 9"><path d="M7 0h1.500v9H7zM0 0v9l6.500-4.500z" fill="currentColor" /></I></button>
            </Transport>
            <Features>{features.map((F, i) => <li key={i}><F /></li>)}</Features>
            <I w={9} h={22} box="0 0 9 22"><path d="M0 0h9v4L5.200 7.500V22H3.800V7.500L0 4z" fill="#4a4a4a" /></I>
            <Spacer />
            <button aria-label="Timeline settings"><Gear /></button>
          </Timeline>
        </AppWindow>

        <Backdrop>
          <svg width="100%" height="8" viewBox="37 712 1206 8" preserveAspectRatio="xMidYMid slice" aria-hidden="true">
            <path d="M37 712h1150v8H37z" fill="#4d4f50" />
            <path d="M37 712h1206v2H37z" fill="#777b7d" />
            <path d="M37 714h48v6H37zM1178 714h65v6h-65z" fill="#1a2229" />
            <path d="M86 715h75v5H86zM276 715h42v5h-42z" fill="#1c527f" />
            <path d="M178 715h66v5h-66zM345 714h40v6h-40z" fill="#30302e" />
            <path d="M520 715h65v6h-65z" fill="#111" />
            <path d="M610 715h72v5h-72z" fill="#7c7256" />
            <path d="M1054 715h42v5h-42z" fill="#c77d1d" />
            <path d="M346 720l14-5M362 720l12-5M376 720l14-5" stroke="#111" strokeWidth="2" />
            <text x="122" y="718" fontSize="5" fontWeight="700" fill="#c8d6e2" fontFamily="Roboto, sans-serif">HYDRATION</text>
            <text x="450" y="718" fontSize="6" fontWeight="700" fill="#141414" fontFamily="Roboto, sans-serif">SYSTEM</text>
          </svg>
        </Backdrop>
      </Desktop>
      <Pointer width="8" height="11" viewBox="0 0 8 11" aria-hidden="true"><path d="M.500.500v8.500l2-1.800 1.500 3.300 1.500-.700L4 6.700h3z" fill="#111" stroke="#fff" strokeWidth=".7" /></Pointer>
    </Screen>
  );
}
